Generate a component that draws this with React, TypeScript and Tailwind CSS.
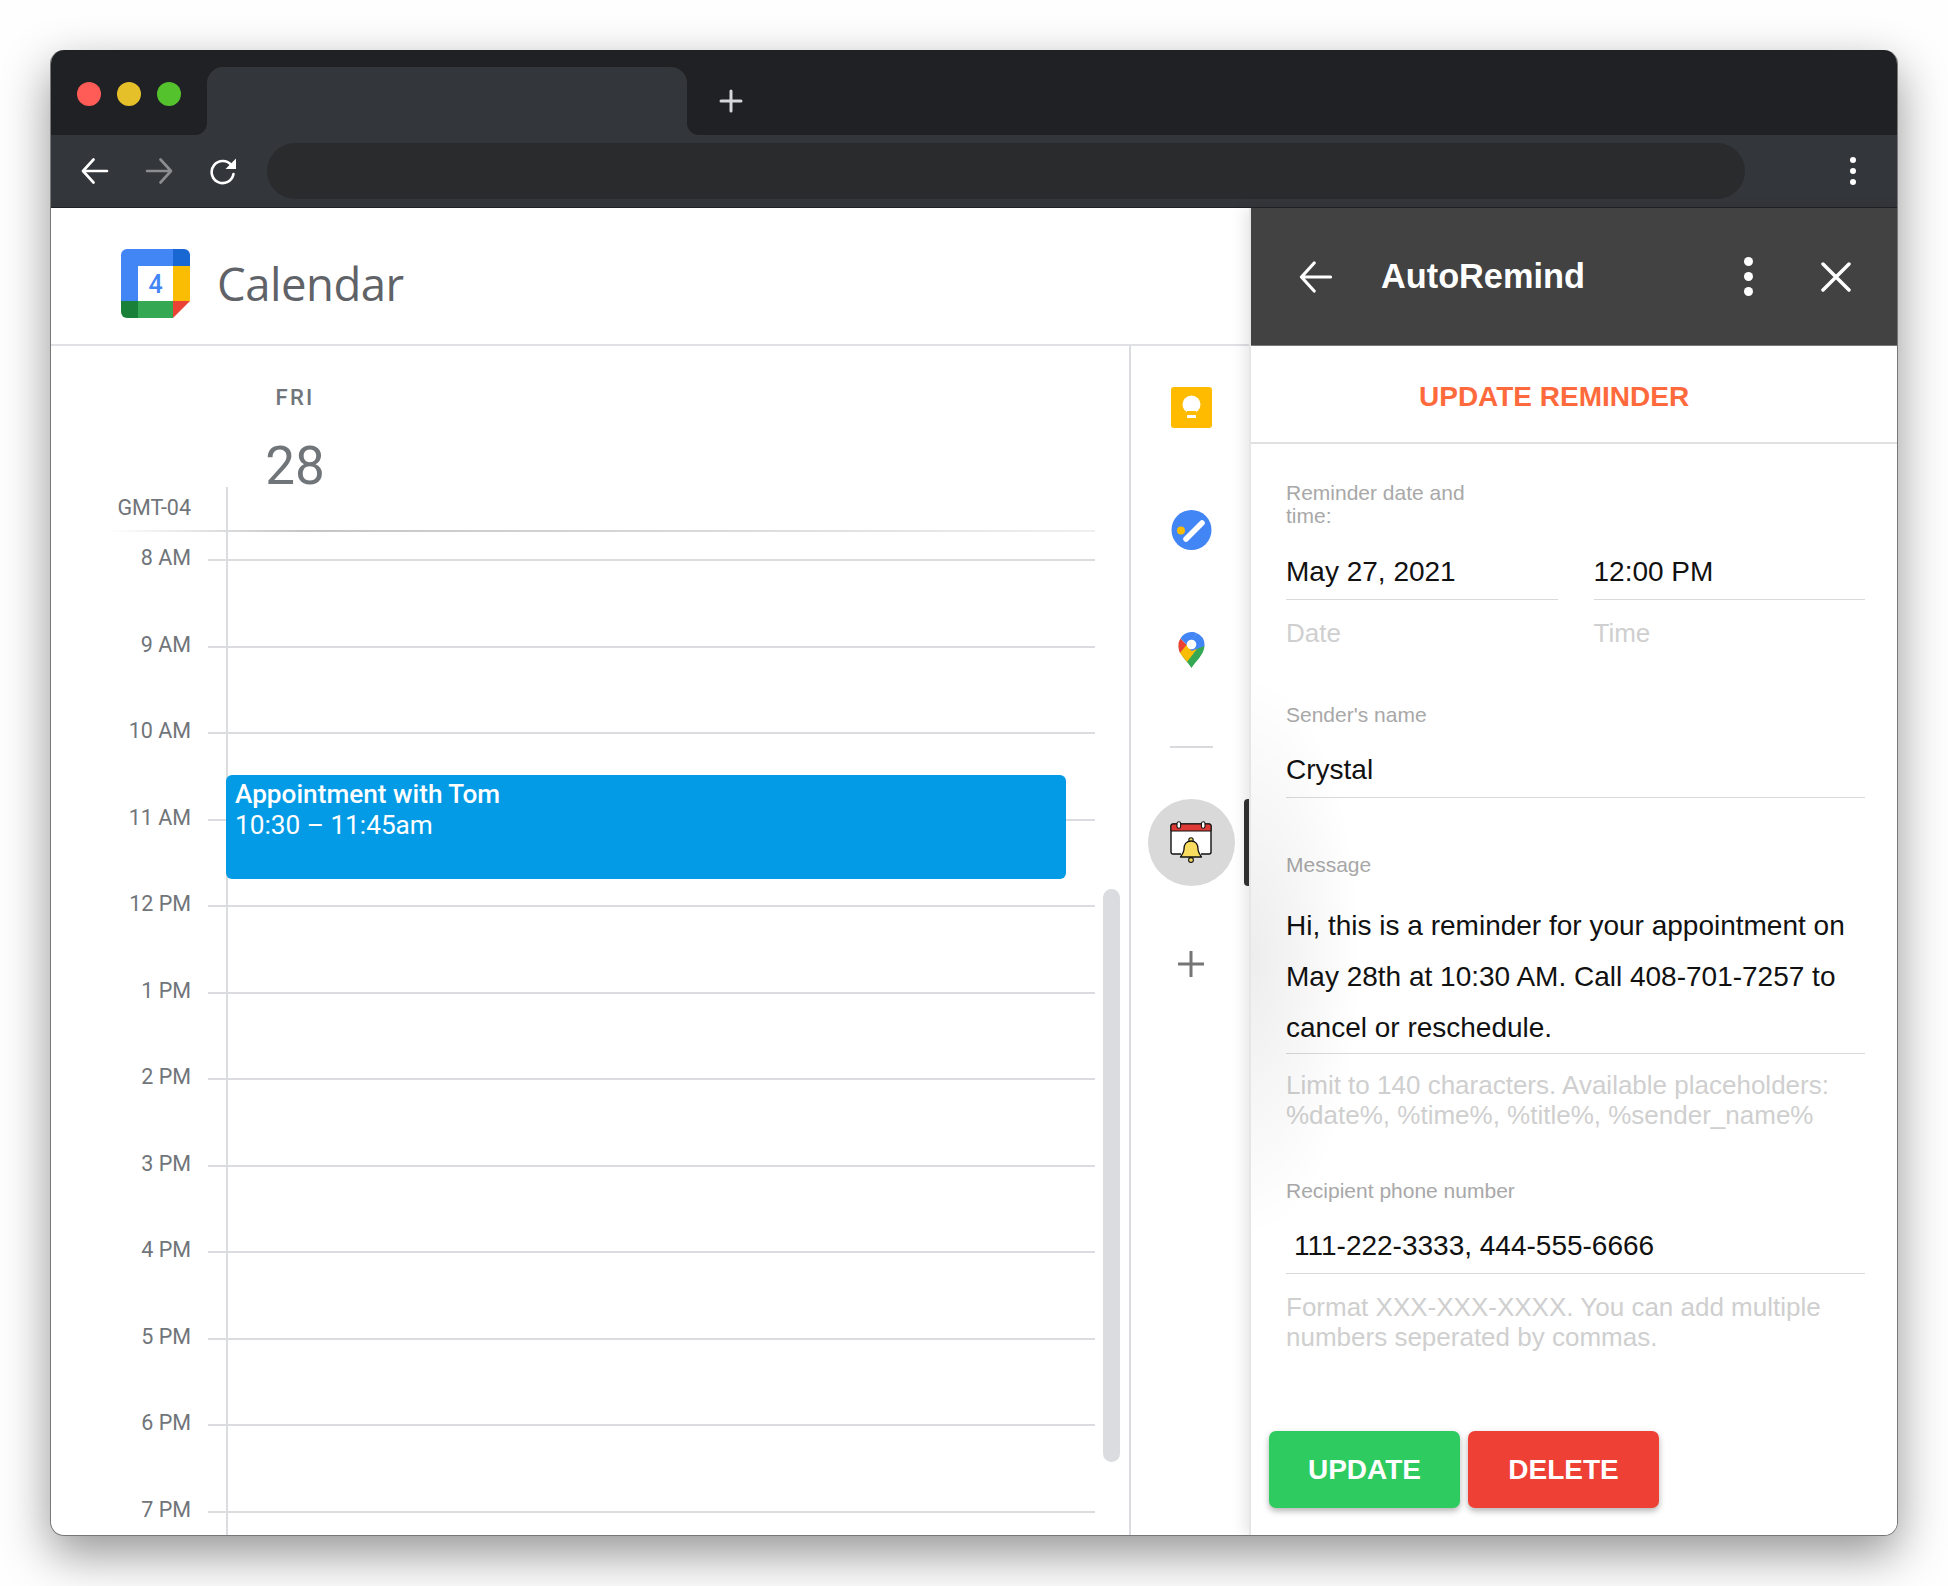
const hours = ["8 AM", "9 AM", "10 AM", "11 AM", "12 PM", "1 PM", "2 PM", "3 PM", "4 PM", "5 PM", "6 PM", "7 PM"];

const roboto = "font-['Roboto',sans-serif]";
const arial = "font-['Liberation_Sans',Arial,sans-serif]";

function ArrowIcon({ flip, color = "white", w = 28, h = 26 }: { flip?: boolean; color?: string; w?: number; h?: number }) {
  return (
    <svg width={w} height={h} viewBox="0 0 28 26" className={flip ? "-scale-x-100" : ""} fill="none" stroke={color} strokeWidth="2.6" strokeLinecap="round" strokeLinejoin="round">
      <path d="M26 13H2.5M12.5 1.5 2 13l10.5 11.5" />
    </svg>
  );
}

function CalendarLogo() {
  return (
    <svg width="69" height="69" viewBox="0 0 69 69" className="shrink-0">
      <path d="M6 0h46v17H17v35H0V6a6 6 0 0 1 6-6z" fill="#4285f4" />
      <path d="M52 0h11a6 6 0 0 1 6 6v11H52z" fill="#1967d2" />
      <rect x="52" y="17" width="17" height="35" fill="#fbbc04" />
      <path d="M17 52h35v17H17z" fill="#34a853" />
      <path d="M0 52h17v17H6a6 6 0 0 1-6-6z" fill="#188038" />
      <path d="M52 52h17L52 69z" fill="#ea4335" />
      <rect x="17" y="17" width="35" height="35" fill="#fff" />
      <text x="34.5" y="44" textAnchor="middle" fontSize="25" fontWeight="500" fill="#4285f4" fontFamily="Roboto, sans-serif">4</text>
    </svg>
  );
}

function BellCalendar() {
  return (
    <svg width="42" height="42" viewBox="0 0 42 42">
      <path d="M11 33H3a2 2 0 0 1-2-2V5a2 2 0 0 1 2-2h36a2 2 0 0 1 2 2v26a2 2 0 0 1-2 2h-8" fill="#fff" stroke="#111" strokeWidth="1.4" />
      <path d="M3 3h36a2 2 0 0 1 2 2v5H1V5a2 2 0 0 1 2-2z" fill="#dd3a35" stroke="#111" strokeWidth="1" />
      <rect x="7" y="0.8" width="3.600" height="6.500" rx="1.800" fill="#fff" stroke="#111" strokeWidth="1.1" />
      <rect x="31.400" y="0.800" width="3.600" height="6.500" rx="1.800" fill="#fff" stroke="#111" strokeWidth="1.1" />
      <circle cx="21" cy="19" r="2.2" fill="#f7dc5f" stroke="#111" strokeWidth="1.1" />
      <circle cx="21" cy="39" r="2.4" fill="#f7dc5f" stroke="#111" strokeWidth="1.1" />
      <path d="M21 20c5 0 7 4 7 8 0 3 1.500 5 3.500 8h-21c2-3 3.500-5 3.500-8 0-4 2-8 7-8z" fill="#f7dc5f" stroke="#111" strokeWidth="1.3" strokeLinejoin="round" />
    </svg>
  );
}

function Label({ children, className = "" }: { children: React.ReactNode; className?: string }) {
  return <div className={`${arial} text-[21px] leading-[23px] text-[#a8a8a8] ${className}`}>{children}</div>;
}

function Hint({ children, className = "" }: { children: React.ReactNode; className?: string }) {
  return <div className={`${arial} text-[26px] leading-[30px] text-[#cfcfcf] ${className}`}>{children}</div>;
}

function Value({ children, className = "" }: { children: React.ReactNode; className?: string }) {
  return <div className={`${arial} text-[28px] leading-[32px] text-[#111] pb-[10.500px] border-b border-[#d9d9d9] ${className}`}>{children}</div>;
}

export default function App() {
  return (
    <div className="min-h-[1586px] w-full bg-[#fefefe] pt-[50px] pl-[50px] pr-[50px] overflow-hidden">
      <div className="relative flex flex-col h-[1486px] rounded-[14px] overflow-hidden border-x border-b border-[#777] bg-white shadow-[0_18px_48px_rgba(0,0,0,0.42)]">

        {/* Tab strip */}
        <div className="flex items-end h-[85px] pl-[26px] bg-[#202124] shrink-0">
          <div className="flex gap-[16px] self-start mt-[32px]">
            <span className="w-[24px] h-[24px] rounded-full bg-[#ff5b57]" />
            <span className="w-[24px] h-[24px] rounded-full bg-[#e6c029]" />
            <span className="w-[24px] h-[24px] rounded-full bg-[#54c22d]" />
          </div>
          <div className="relative ml-[26px] w-[480px] h-[68px] rounded-t-[16px] bg-[#33363a]">
            <span className="absolute bottom-0 -left-[12px] w-[12px] h-[12px] bg-[#33363a]"><span className="block w-full h-full bg-[#202124] rounded-br-[12px]" /></span>
            <span className="absolute bottom-0 -right-[12px] w-[12px] h-[12px] bg-[#33363a]"><span className="block w-full h-full bg-[#202124] rounded-bl-[12px]" /></span>
          </div>
          <svg width="24" height="24" viewBox="0 0 24 24" className="ml-[32px] mb-[22px]" stroke="#d5d7da" strokeWidth="3" strokeLinecap="round">
            <path d="M12 2v20M2 12h20" />
          </svg>
        </div>

        {/* Toolbar */}
        <div className="flex items-center h-[73px] pl-[30px] pr-[41px] bg-[#33363a] border-b border-[#202124] shrink-0">
          <ArrowIcon />
          <div className="ml-[36px]"><ArrowIcon flip color="#8b8d90" /></div>
          <svg width="28" height="28" viewBox="0 0 28 28" className="ml-[36px]" fill="none">
            <path d="M22.500 8.500A11 11 0 1 0 24.500 17" stroke="white" strokeWidth="2.600" strokeLinecap="round" />
            <path d="M27 1.500V12H16.500z" fill="white" />
          </svg>
          <div className="ml-[30px] w-[1478px] h-[56px] rounded-full bg-[#292b2d]" />
          <div className="ml-auto flex flex-col gap-[5px]">
            <span className="w-[6px] h-[6px] rounded-full bg-white" />
            <span className="w-[6px] h-[6px] rounded-full bg-white" />
            <span className="w-[6px] h-[6px] rounded-full bg-white" />
          </div>
        </div>

        {/* Content */}
        <div className="flex flex-1 min-h-0">
          <div className="flex flex-col w-[1200px] shrink-0">
            <div className="flex items-center h-[138px] pl-[70px] pt-[15px] border-b-2 border-[#dfe1e5] shrink-0">
              <CalendarLogo />
              <span className="ml-[27px] font-['Open_Sans',sans-serif] text-[45.500px] leading-none tracking-[-0.5px] text-[#5f6368]">Calendar</span>
            </div>

            <div className="flex flex-1 min-h-0">
              {/* Day column */}
              <div className="relative flex flex-col w-[1080px] shrink-0 border-r-2 border-[#dadce0] overflow-hidden">
                <div className="h-[184px] shrink-0">
                  <div className={`${roboto} ml-[184px] w-[120px] mt-[41px] text-center text-[22px] leading-[22px] font-medium tracking-[0.1em] text-[#70757a]`}>FRI</div>
                  <div className={`${roboto} ml-[184px] w-[120px] mt-[30px] text-center text-[53px] leading-[54px] text-[#70757a]`}>28</div>
                  <div className={`${roboto} w-[140px] mt-[4px] text-right text-[21.500px] leading-[21px] text-[#70757a]`}>GMT-04</div>
                </div>
                <div className="h-[2px] ml-[55px] mr-[34px] shrink-0 bg-gradient-to-r from-transparent via-[#c4c5c7] via-20% to-[#efefef]" />

                <div className="h-[15px] shrink-0" />
                {hours.map((h, i) => (
                  <div key={h} className={`flex items-end shrink-0 ${i === 0 ? "" : "h-[86.500px]"}`}>
                    <div className={`${roboto} w-[140px] text-right text-[21.500px] leading-[21px] -mb-[7px] text-[#70757a]`}>{h}</div>
                    <div className="ml-[17px] mr-[34px] flex-1 h-[2px] bg-[#dadce0]" />
                  </div>
                ))}

                <div className="absolute left-[175px] top-[141px] bottom-0 w-[2px] bg-[#dadce0]" />
                <div className={`${roboto} absolute left-[175px] top-[429px] w-[840px] h-[104px] rounded-[6px] bg-[#039be5] pl-[9px] pt-[4px] text-[26.200px] leading-[31px] text-white`}>
                  <div className="font-medium">Appointment with Tom</div>
                  <div>10:30 – 11:45am</div>
                </div>
                <div className="absolute left-[1052px] top-[543px] w-[17px] h-[573px] rounded-full bg-[#dadce0]" />
              </div>

              {/* Side rail */}
              <div className="relative flex flex-col items-center flex-1 pt-[41px]">
                <svg width="41" height="41" viewBox="0 0 41 41">
                  <rect width="41" height="41" rx="3" fill="#ffbb00" />
                  <circle cx="20.500" cy="17.500" r="9" fill="#fff" />
                  <rect x="16" y="24" width="9" height="3" fill="#ffbb00" />
                  <rect x="16" y="28" width="9" height="3" rx="0.500" fill="#fff" />
                </svg>
                <svg width="41" height="40" viewBox="0 0 41 40" className="mt-[82px]">
                  <circle cx="20.500" cy="20" r="20" fill="#4285f4" />
                  <circle cx="10" cy="20.500" r="4" fill="#fbbc04" />
                  <path d="M15 29 31 13" stroke="#fff" strokeWidth="5.500" strokeLinecap="round" />
                </svg>
                <svg width="27" height="37" viewBox="0 0 27 37" className="mt-[81px]">
                  <path d="M13.500 37C10 31 1 24 .500 15L13.500 13l13 2C26 24 17 31 13.500 37z" fill="#34a853" />
                  <path d="M.500 15c-.300-2.500.300-5 2-7.500L10 15l-8 7a16 16 0 0 1-1.500-7z" fill="#ea4335" />
                  <path d="M2 22c2.500 3.500 5 6 7 9L22 14 10 12z" fill="#fbbc04" />
                  <path d="M2.500 7.500A13 13 0 0 1 13.500 1c2 0 4 .500 5.500 1.300L9 14z" fill="#4285f4" />
                  <path d="M19 2.300A13 13 0 0 1 26.500 15L13.500 20 9 13z" fill="#4285f4" />
                  <circle cx="13.500" cy="13.500" r="4.800" fill="#fff" />
                </svg>
                <div className="mt-[78px] w-[43px] h-[1.500px] bg-[#d8dadd]" />
                <div className="relative mt-[51px] w-full flex justify-center">
                  <div className="flex items-center justify-center w-[87px] h-[87px] rounded-full bg-[#d9d9d9]">
                    <BellCalendar />
                  </div>
                  <span className="absolute right-[2px] top-0 w-[5px] h-[87px] rounded-l-[4px] bg-[#333]" />
                </div>
                <svg width="26" height="26" viewBox="0 0 26 26" className="mt-[65px]" stroke="#757575" strokeWidth="3">
                  <path d="M13 0v26M0 13h26" />
                </svg>
              </div>
            </div>
          </div>

          {/* AutoRemind panel */}
          <div className="relative z-10 flex flex-col flex-1 min-w-0 bg-white shadow-[-2px_0_0_#e6e6e6,-6px_0_14px_rgba(0,0,0,0.1)]">
            {/* soft shade along the panel's left edge */}
            <div className="absolute left-0 top-[468px] w-[110px] h-[562px] pointer-events-none bg-[radial-gradient(ellipse_100%_50%_at_left_center,rgba(0,0,0,0.07),transparent)]" />

            <div className="flex items-center h-[138px] pr-[46px] bg-[#424242] shrink-0 border-b border-[#777]">
              <div className="ml-[48px]"><ArrowIcon w={34} h={32} /></div>
              <span className={`${arial} ml-[48px] text-[34.300px] leading-none font-bold text-white`}>AutoRemind</span>
              <div className="ml-auto flex flex-col gap-[6px]">
                <span className="w-[9px] h-[9px] rounded-full bg-white" />
                <span className="w-[9px] h-[9px] rounded-full bg-white" />
                <span className="w-[9px] h-[9px] rounded-full bg-white" />
              </div>
              <svg width="30" height="30" viewBox="0 0 30 30" className="ml-[68px]" stroke="white" strokeWidth="3.500" strokeLinecap="round">
                <path d="M2 2l26 26M28 2 2 28" />
              </svg>
            </div>

            <div className="flex items-center h-[98px] pl-[168px] pt-[5px] border-b-2 border-[#e0e0e0] shrink-0">
              <span className={`${arial} text-[28px] leading-none font-bold text-[#ff6a3c]`}>UPDATE REMINDER</span>
            </div>

            <div className="flex flex-col flex-1 min-h-0 pl-[35px] pr-[32px] pb-[27px]">
              <Label className="mt-[36.500px] w-[200px]">Reminder date and time:</Label>
              <div className="flex gap-[36px] mt-[29.500px]">
                <div className="flex-1">
                  <Value>May 27, 2021</Value>
                  <Hint className="mt-[18.500px]">Date</Hint>
                </div>
                <div className="flex-1">
                  <Value>12:00 PM</Value>
                  <Hint className="mt-[18.500px]">Time</Hint>
                </div>
              </div>

              <Label className="mt-[54.500px]">Sender's name</Label>
              <Value className="mt-[28.500px]">Crystal</Value>

              <Label className="mt-[55.500px]">Message</Label>
              <div className={`${arial} mt-[24px] text-[28px] leading-[51px] text-[#111] border-b border-[#d9d9d9]`}>
                Hi, this is a reminder for your appointment on May 28th at 10:30 AM. Call 408-701-7257 to cancel or reschedule.
              </div>
              <Hint className="mt-[16px]">Limit to 140 characters. Available placeholders: %date%, %time%, %title%, %sender_name%</Hint>

              <Label className="mt-[48.500px]">Recipient phone number</Label>
              <Value className="mt-[28.500px] pl-[8px]">111-222-3333, 444-555-6666</Value>
              <Hint className="mt-[18.500px]">Format XXX-XXX-XXXX. You can add multiple numbers seperated by commas.</Hint>

              <div className="flex gap-[8px] mt-auto -ml-[17px]">
                <button className={`${arial} w-[191px] h-[77px] rounded-[7px] bg-[#2ecc60] text-[28px] font-bold text-white shadow-[0_3px_6px_rgba(0,0,0,0.3)]`}>UPDATE</button>
                <button className={`${arial} w-[191px] h-[77px] rounded-[7px] bg-[#ee4035] text-[28px] font-bold text-white shadow-[0_3px_6px_rgba(0,0,0,0.3)]`}>DELETE</button>
              </div>
            </div>
          </div>
        </div>
      </div>
    </div>
  );
}
